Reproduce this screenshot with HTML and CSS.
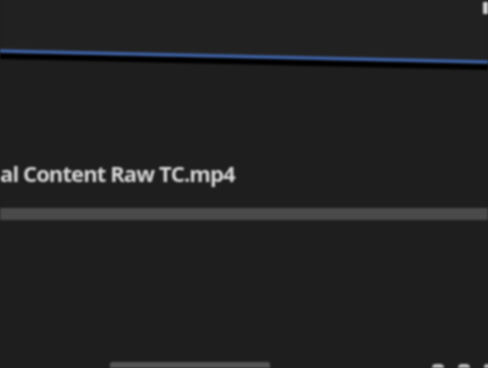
FILE: index.html
```html
<!DOCTYPE html>
<html>
<head>
<meta charset="utf-8">
<link rel="stylesheet" href="styles.css">
</head>
<body>
<div class="frame">
  <div class="top">
    <span class="corner-glyph"></span>
  </div>
  <svg class="curve" width="488" height="24" viewBox="0 0 488 24">
    <line x1="0" y1="6" x2="488" y2="17" stroke="#000" stroke-width="6" transform="translate(0,3)"/>
    <line x1="0" y1="4" x2="488" y2="15" stroke="#3d60a2" stroke-width="3.5"/>
  </svg>
  <div class="clip">
    <div class="clip-name">al Content Raw TC.mp4</div>
    <div class="clip-bar"></div>
  </div>
  <div class="bottom">
    <div class="scroll-bar"></div>
    <div class="controls">
      <span class="ctl"></span><span class="ctl"></span><span class="ctl small"></span>
    </div>
  </div>
</div>
</body>
</html>
```
FILE: styles.css
```css
html, body {
  margin: 0;
  padding: 0;
  background: #1e1e1e;
  overflow: hidden;
}
.frame {
  width: 488px;
  height: 368px;
  display: flex;
  flex-direction: column;
  background: #1e1e1e;
  filter: blur(1px);
  font-family: "Open Sans", "Liberation Sans", sans-serif;
}
.top {
  height: 47px;
  background: #212121;
  display: flex;
  justify-content: flex-end;
  align-items: flex-start;
}
.corner-glyph {
  width: 5px;
  height: 12px;
  margin-top: 2px;
  background: #d0d0d0;
}
.curve {
  display: block;
  background: linear-gradient(#212121 50%, #1e1e1e 50%);
}
.clip {
  display: flex;
  flex-direction: column;
  padding-top: 88px;
}
.clip-name {
  color: #d6d6d6;
  font-size: 22px;
  font-weight: 700;
  letter-spacing: -0.9px;
  line-height: 28px;
  white-space: nowrap;
}
.clip-bar {
  margin-top: 21px;
  height: 12px;
  background: #4a4a4a;
}
.bottom {
  flex: 1;
  display: flex;
  align-items: flex-end;
  justify-content: space-between;
}
.scroll-bar {
  width: 160px;
  height: 6px;
  margin-left: 110px;
  background: #555;
  border-radius: 2px 2px 0 0;
}
.controls {
  display: flex;
  gap: 14px;
  align-items: flex-end;
  margin-right: -2px;
}
.ctl {
  width: 12px;
  height: 4px;
  background: #bdbdbd;
  border-radius: 4px 4px 0 0;
}
.ctl.small { width: 6px; }
```
